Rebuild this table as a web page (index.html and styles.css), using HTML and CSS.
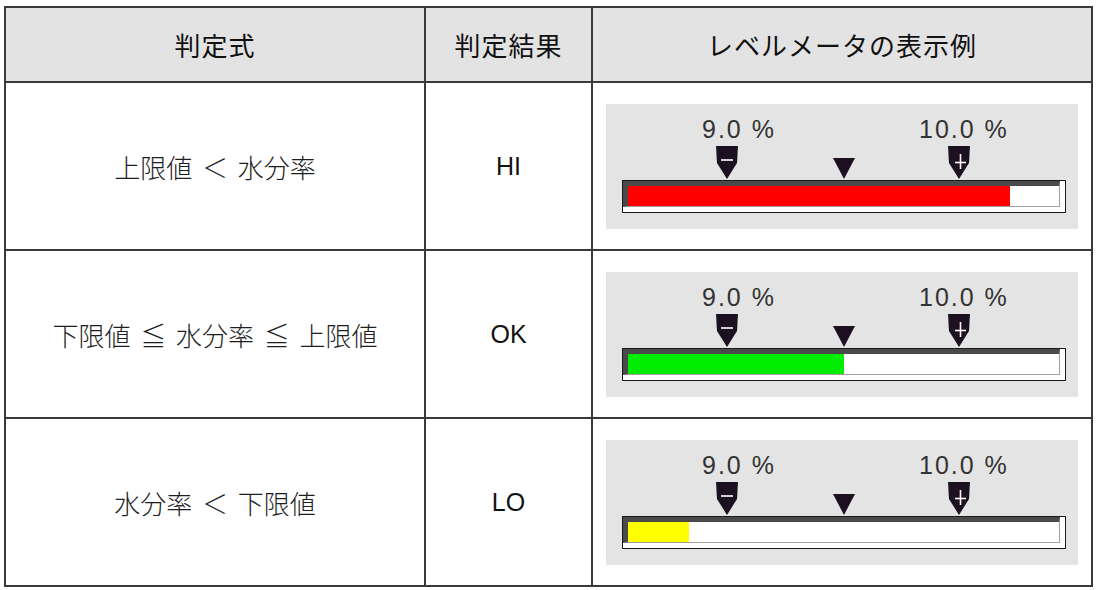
FILE: index.html
```html
<!DOCTYPE html>
<html lang="ja">
<head>
<meta charset="utf-8">
<title>レベルメータ</title>
<link rel="stylesheet" href="styles.css">
</head>
<body>
<div class="grid">
  <div class="cell head">判定式</div>
  <div class="cell head">判定結果</div>
  <div class="cell head">レベルメータの表示例</div>

  <div class="cell expr">上限値 ＜ 水分率</div>
  <div class="cell result">HI</div>
  <div class="cell meter-cell">
    <div class="meter">
      <div class="scale">
        <span class="lbl lbl-lo">9.0 %</span>
        <span class="lbl lbl-hi">10.0 %</span>
        <svg class="mk mk-lo" viewBox="0 0 22 33"><path d="M0 0H22L21 17L11 33L1 17Z"/><line x1="5" y1="14" x2="17" y2="14"/></svg>
        <svg class="cur" viewBox="0 0 22 21"><path d="M0 0H22L11 21Z"/></svg>
        <svg class="mk mk-hi" viewBox="0 0 22 33"><path d="M0 0H22L21 17L11 33L1 17Z"/><line x1="12.5" y1="8" x2="12.5" y2="23"/><line x1="7" y1="16.5" x2="18" y2="16.5"/></svg>
      </div>
      <div class="bar"><div class="track"><div class="fill red" style="width:88.6%"></div></div></div>
    </div>
  </div>

  <div class="cell expr">下限値 ≦ 水分率 ≦ 上限値</div>
  <div class="cell result">OK</div>
  <div class="cell meter-cell">
    <div class="meter">
      <div class="scale">
        <span class="lbl lbl-lo">9.0 %</span>
        <span class="lbl lbl-hi">10.0 %</span>
        <svg class="mk mk-lo" viewBox="0 0 22 33"><path d="M0 0H22L21 17L11 33L1 17Z"/><line x1="5" y1="14" x2="17" y2="14"/></svg>
        <svg class="cur" viewBox="0 0 22 21"><path d="M0 0H22L11 21Z"/></svg>
        <svg class="mk mk-hi" viewBox="0 0 22 33"><path d="M0 0H22L21 17L11 33L1 17Z"/><line x1="12.5" y1="8" x2="12.5" y2="23"/><line x1="7" y1="16.5" x2="18" y2="16.5"/></svg>
      </div>
      <div class="bar"><div class="track"><div class="fill green" style="width:50.1%"></div></div></div>
    </div>
  </div>

  <div class="cell expr">水分率 ＜ 下限値</div>
  <div class="cell result">LO</div>
  <div class="cell meter-cell">
    <div class="meter">
      <div class="scale">
        <span class="lbl lbl-lo">9.0 %</span>
        <span class="lbl lbl-hi">10.0 %</span>
        <svg class="mk mk-lo" viewBox="0 0 22 33"><path d="M0 0H22L21 17L11 33L1 17Z"/><line x1="5" y1="14" x2="17" y2="14"/></svg>
        <svg class="cur" viewBox="0 0 22 21"><path d="M0 0H22L11 21Z"/></svg>
        <svg class="mk mk-hi" viewBox="0 0 22 33"><path d="M0 0H22L21 17L11 33L1 17Z"/><line x1="12.5" y1="8" x2="12.5" y2="23"/><line x1="7" y1="16.5" x2="18" y2="16.5"/></svg>
      </div>
      <div class="bar"><div class="track"><div class="fill yellow" style="width:14.2%"></div></div></div>
    </div>
  </div>
</div>
</body>
</html>
```

FILE: styles.css
```css
* { box-sizing: border-box; }
html, body { margin: 0; padding: 0; background: #fff; }
body {
  font-family: "Noto Sans CJK JP", "Noto Sans", sans-serif;
  color: #222;
}
.grid {
  display: grid;
  grid-template-columns: 420px 167px 500px;
  grid-template-rows: 75px 168px 168px 168px;
  margin: 6px 0 0 4px;
  width: 1089px;
  border-top: 2px solid #3a3a3a;
  border-left: 2px solid #3a3a3a;
}
.cell {
  border-right: 2px solid #3a3a3a;
  border-bottom: 2px solid #3a3a3a;
  display: flex;
  align-items: center;
  justify-content: center;
}
.head {
  background: #e3e3e3;
  font-size: 26px;
  letter-spacing: 1px;
  color: #111;
}
.expr {
  font-size: 26px;
  word-spacing: 4px;
  color: #1e1e1e;
  font-weight: 300;
}
.result {
  font-family: "Liberation Sans", Arial, sans-serif;
  font-size: 25px;
  color: #111;
}
.meter-cell { justify-content: flex-start; padding-left: 13px; }
.meter {
  width: 472px;
  height: 125px;
  background: #e4e4e4;
  padding-left: 16px;
  display: flex;
  flex-direction: column;
}
.scale {
  position: relative;
  height: 76px;
  flex: none;
}
.lbl {
  position: absolute;
  top: 13px;
  font-family: "Liberation Sans", Arial, sans-serif;
  font-size: 25px;
  line-height: 25px;
  letter-spacing: 2px;
  color: #333;
  white-space: nowrap;
}
.lbl-lo { left: 80px; }
.lbl-hi { left: 297px; }
.mk, .cur { position: absolute; fill: #1b1120; }
.mk { width: 22px; height: 33px; top: 42px; }
.mk line { stroke: #fff; stroke-width: 1.6; }
.mk-lo { left: 94px; }
.mk-hi { left: 326px; }
.cur { width: 22px; height: 21px; top: 54px; left: 211px; }
.bar {
  width: 444px;
  height: 33px;
  flex: none;
  border: 1px solid #1a1a1a;
  background: #fff;
  padding: 0 5px 5px 0;
}
.track {
  height: 100%;
  border-top: 5px solid #4a4a4a;
  border-left: 5px solid #4a4a4a;
  border-right: 1px solid #a0a0a0;
  border-bottom: 1px solid #a0a0a0;
  background: #fff;
}
.fill { height: 100%; }
.red { background: #ff0000; }
.green { background: #00ec00; }
.yellow { background: #ffff00; }
```
